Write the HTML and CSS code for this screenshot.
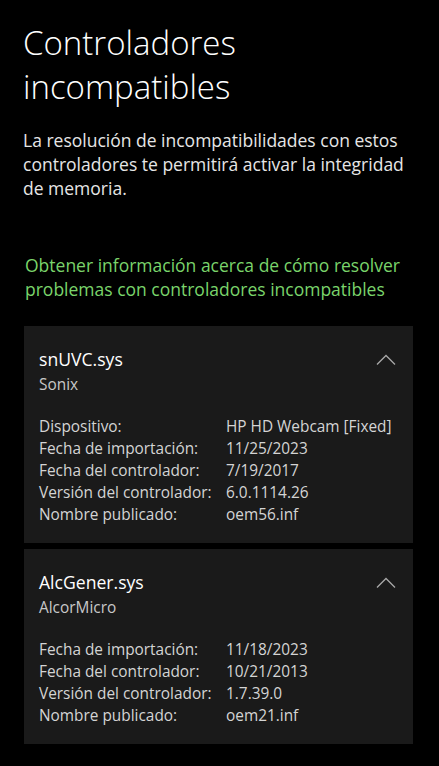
FILE: index.html
```html
<!DOCTYPE html>
<html lang="es">
<head>
<meta charset="utf-8">
<title>Controladores incompatibles</title>
<link rel="stylesheet" href="styles.css">
</head>
<body>
<main class="page">
  <h1 class="title">Controladores incompatibles</h1>
  <p class="desc">La resolución de incompatibilidades con estos controladores te permitirá activar la integridad de memoria.</p>
  <a class="link" href="#">Obtener información acerca de cómo resolver problemas con controladores incompatibles</a>

  <section class="cards">
    <div class="card">
      <div class="card-head">
        <div>
          <div class="card-title">snUVC.sys</div>
          <div class="card-sub">Sonix</div>
        </div>
        <svg class="chev" width="20" height="12" viewBox="0 0 20 12"><path d="M1 10.5 L10 1.5 L19 10.5" fill="none" stroke="#a8a8a8" stroke-width="1.3"/></svg>
      </div>
      <dl class="details">
        <dt>Dispositivo:</dt><dd>HP HD Webcam [Fixed]</dd>
        <dt>Fecha de importación:</dt><dd>11/25/2023</dd>
        <dt>Fecha del controlador:</dt><dd>7/19/2017</dd>
        <dt>Versión del controlador:</dt><dd>6.0.1114.26</dd>
        <dt>Nombre publicado:</dt><dd>oem56.inf</dd>
      </dl>
    </div>
    <div class="card">
      <div class="card-head">
        <div>
          <div class="card-title">AlcGener.sys</div>
          <div class="card-sub">AlcorMicro</div>
        </div>
        <svg class="chev" width="20" height="12" viewBox="0 0 20 12"><path d="M1 10.5 L10 1.5 L19 10.5" fill="none" stroke="#a8a8a8" stroke-width="1.3"/></svg>
      </div>
      <dl class="details">
        <dt>Fecha de importación:</dt><dd>11/18/2023</dd>
        <dt>Fecha del controlador:</dt><dd>10/21/2013</dd>
        <dt>Versión del controlador:</dt><dd>1.7.39.0</dd>
        <dt>Nombre publicado:</dt><dd>oem21.inf</dd>
      </dl>
    </div>
  </section>
</main>
</body>
</html>
```
FILE: styles.css
```css
html, body {
  margin: 0;
  padding: 0;
  background: #000;
}
body {
  font-family: "Segoe UI", "Open Sans", "Noto Sans", sans-serif;
  color: #fff;
}
.page {
  padding: 21px 23px 0 23px;
  display: flex;
  flex-direction: column;
}
.title {
  margin: 0;
  font-size: 33px;
  font-weight: 300;
  line-height: 44px;
  color: #fff;
}
.desc {
  margin: 19px 0 0 0;
  font-size: 17.5px;
  line-height: 24px;
  color: #e6e6e6;
  width: 393px;
}
.link {
  margin-top: 53px;
  font-size: 17.5px;
  line-height: 24px;
  color: #7ad46b;
  text-decoration: none;
  padding-left: 2px;
  width: 393px;
}
.cards {
  margin-top: 25px;
  display: flex;
  flex-direction: column;
  gap: 6px;
  width: 389px;
  margin-left: 1px;
}
.card {
  background: #1a1a1a;
  padding: 20px 17px 17px 15px;
}
.card-head {
  display: flex;
  justify-content: space-between;
  align-items: flex-start;
}
.card-title {
  font-size: 17.6px;
  line-height: 26px;
  color: #fff;
}
.card-sub {
  font-size: 15.4px;
  line-height: 24px;
  margin-top: 1px;
  color: #c8c8c8;
}
.chev {
  margin-top: 8px;
}
.details {
  margin: 19px 0 0 0;
  display: grid;
  grid-template-columns: 187px 1fr;
  font-size: 15.4px;
  line-height: 22px;
  color: #d4d4d4;
}
.details dt, .details dd {
  margin: 0;
  white-space: nowrap;
}
```
